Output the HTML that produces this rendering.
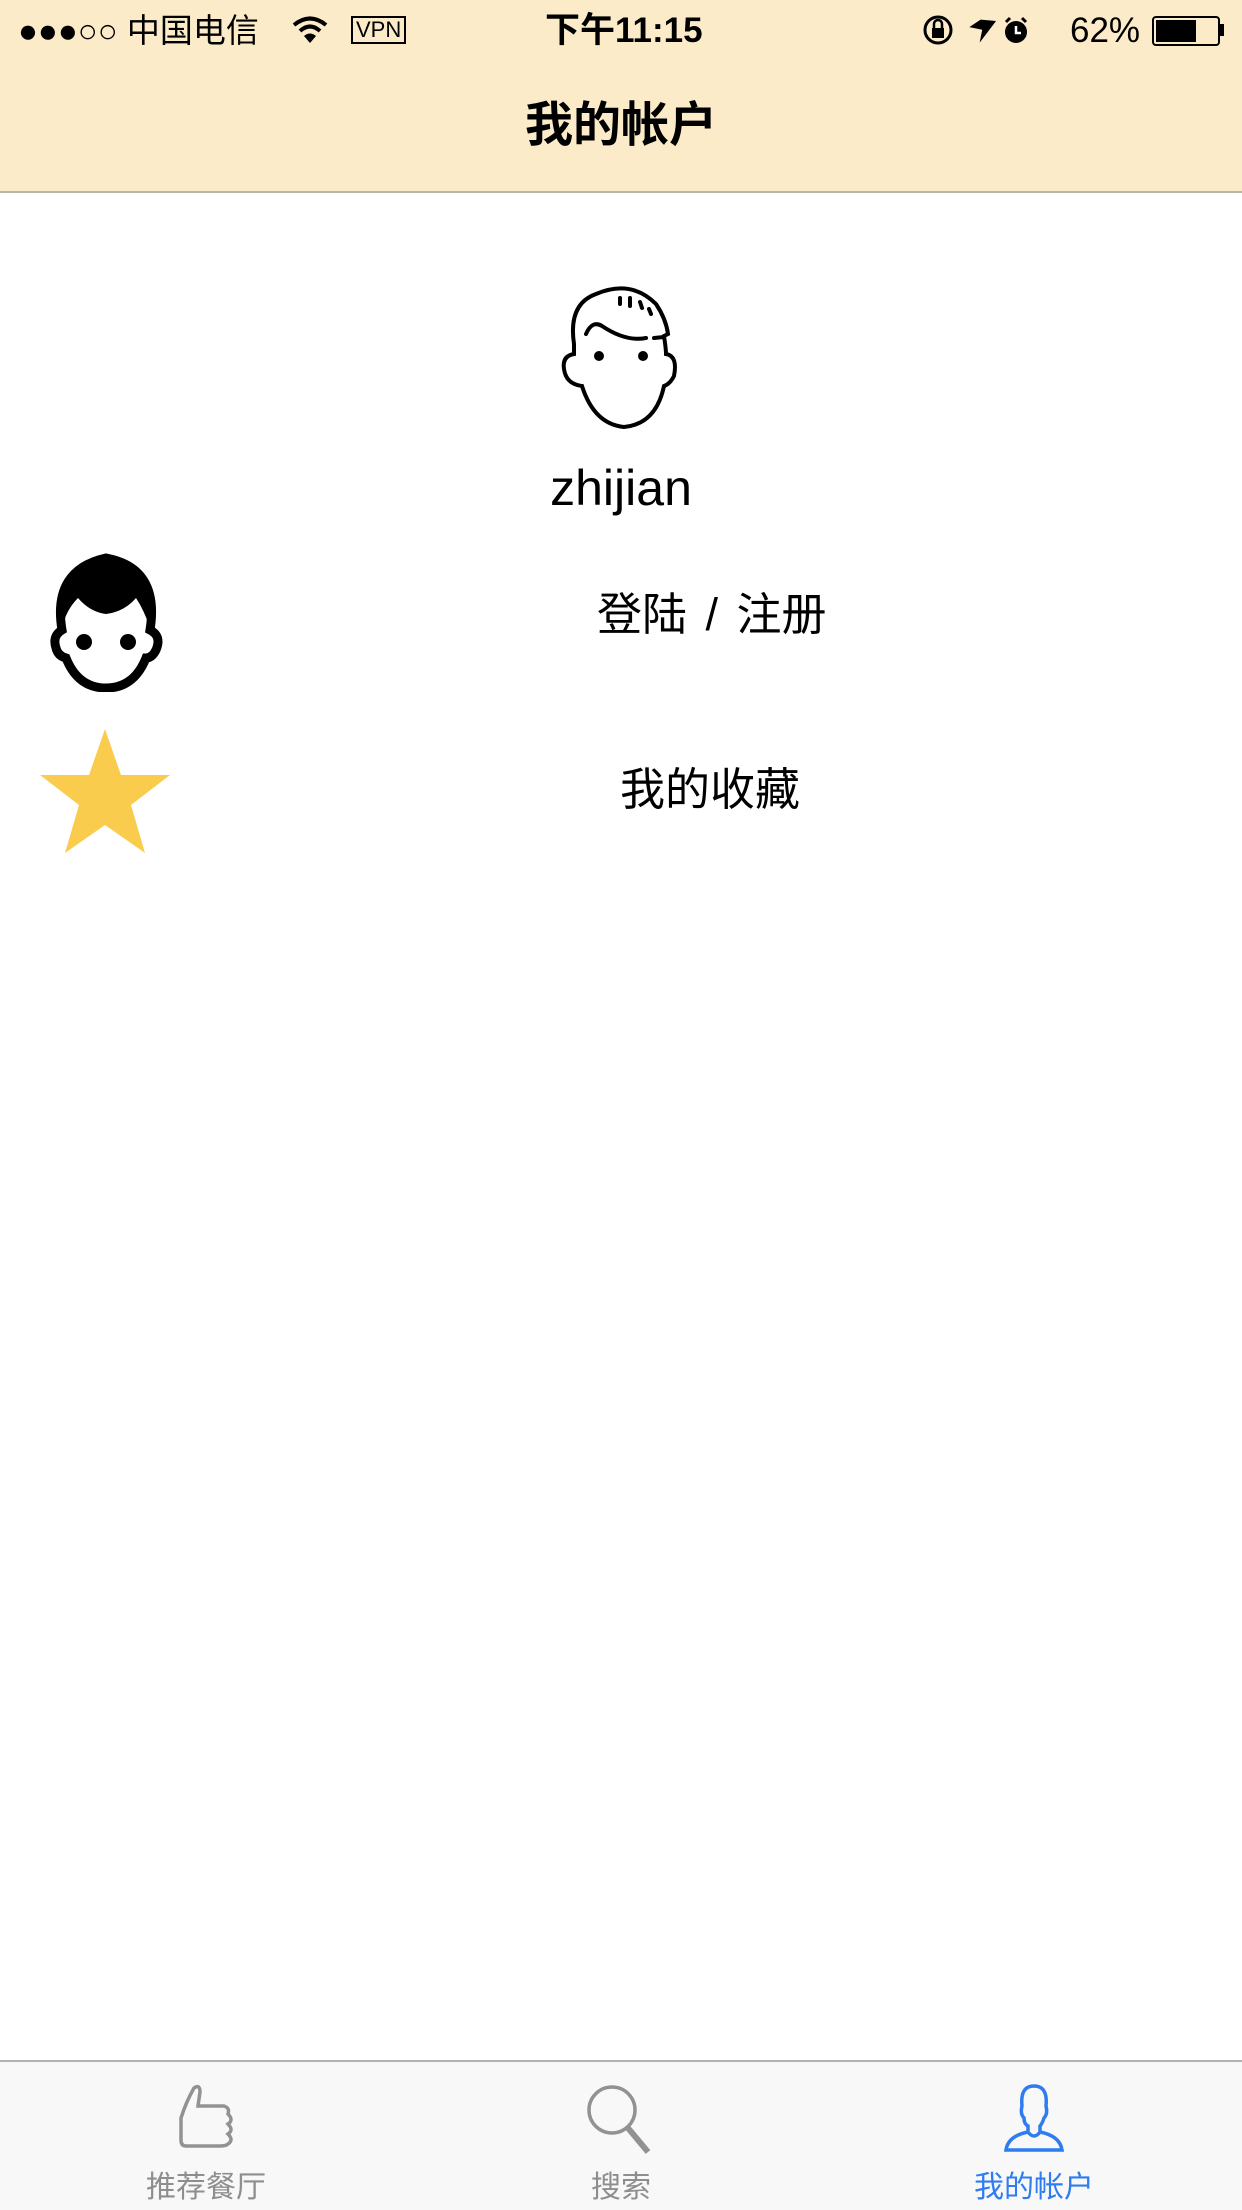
<!DOCTYPE html>
<html><head><meta charset="utf-8"><style>
body{margin:0;width:1242px;height:2208px;position:relative;background:#fff;font-family:"Liberation Sans","Noto Sans CJK SC",sans-serif;overflow:hidden}
.a{position:absolute;white-space:nowrap}
</style></head><body>
<div class="a" style="left:0;top:0;width:1242px;height:191px;background:#fbebc8;border-bottom:2px solid #b9b4a8"></div>
<div class="a" style="left:18px;top:10px;font-size:33px;line-height:42px">●●●○○ 中国电信</div>
<svg class="a" style="left:292px;top:16px" width="36" height="28" viewBox="0 0 36 28"><path d="M2 9 Q18 -4 34 9" stroke="#000" stroke-width="4" fill="none"/><path d="M8 15 Q18 6 28 15" stroke="#000" stroke-width="4" fill="none"/><path d="M12 20 L18 27 L24 20 Q18 15 12 20Z"/></svg>
<div class="a" style="left:351px;top:16px;border:2px solid #000;font-size:22px;line-height:22px;padding:1px 3px">VPN</div>
<div class="a" style="left:545px;top:10px;font-size:35px;line-height:42px;font-weight:bold">下午11:15</div>
<svg class="a" style="left:922px;top:14px" width="110" height="34" viewBox="0 0 110 34"><circle cx="16" cy="16" r="13" stroke="#000" stroke-width="3" fill="none"/><rect x="10" y="14" width="12" height="10"/><path d="M12 14 V10 a4 4 0 0 1 8 0 V14" stroke="#000" stroke-width="2.5" fill="none"/><path d="M55 6 L70 2 L62 28 L60 15 L47 17Z" transform="rotate(20 58 16)"/><circle cx="94" cy="18" r="11"/><path d="M84 8 L88 4 M104 8 L100 4" stroke="#000" stroke-width="3"/><path d="M94 12 V19 H99" stroke="#fff" stroke-width="2.5" fill="none"/></svg>
<div class="a" style="left:1070px;top:10px;font-size:35px;line-height:42px">62%</div>
<div class="a" style="left:1152px;top:16px;width:64px;height:26px;border:2px solid #000;border-radius:4px"></div>
<div class="a" style="left:1156px;top:20px;width:40px;height:22px;background:#000"></div>
<div class="a" style="left:1220px;top:24px;width:4px;height:12px;background:#000"></div>
<div class="a" style="left:0;width:1242px;top:96px;text-align:center;font-size:48px;line-height:60px;font-weight:bold">我的帐户</div>

<svg class="a" style="left:556px;top:284px" width="130" height="146" viewBox="0 0 130 146"><g stroke="#000" stroke-width="4" fill="none" stroke-linecap="round"><path d="M18 60 Q12 20 40 10 Q75 -5 100 20 Q110 35 112 50 L108 52 Q110 65 110 70 Q122 72 118 92 Q114 100 108 102 Q100 140 68 143 Q38 140 26 102 Q10 100 8 85 Q6 72 18 70 Z"/><path d="M30 50 Q36 36 46 42 Q70 58 90 54"/><path d="M98 54 L108 53"/><path d="M64 14 V20 M74 14 V22 M84 18 L86 24 M93 25 L95 30"/></g><circle cx="43" cy="72" r="5"/><circle cx="87" cy="72" r="5"/></svg>
<div class="a" style="left:0;width:1242px;top:458px;text-align:center;font-size:50px;line-height:60px">zhijian</div>

<svg class="a" style="left:44px;top:550px" width="124" height="142" viewBox="0 0 124 142"><path d="M18 80 Q8 20 62 8 Q116 18 106 80 Q118 86 112 100 Q108 108 102 108 Q90 138 62 138 Q34 138 22 108 Q14 106 12 98 Q8 86 18 80Z" fill="#fff" stroke="#000" stroke-width="9"/><path d="M18 78 Q12 12 62 8 Q114 14 106 78 Q100 60 92 48 Q80 62 62 64 Q46 62 34 48 Q22 60 18 78Z"/><circle cx="40" cy="92" r="8"/><circle cx="84" cy="92" r="8"/></svg>
<div class="a" style="left:597px;top:585px;font-size:45px;line-height:60px">登陆 <span style="margin:0 6px">/</span> 注册</div>

<svg class="a" style="left:38px;top:727px" width="134" height="128" viewBox="0 0 134 128"><path d="M67 2 L83 48 L132 48 L93 78 L107 126 L67 98 L27 126 L41 78 L2 48 L51 48Z" fill="#f9cc4e"/></svg>
<div class="a" style="left:620px;top:760px;font-size:45px;line-height:60px">我的收藏</div>

<div class="a" style="left:0;top:2060px;width:1242px;height:148px;background:#f8f8f8;border-top:2px solid #b2b2b2"></div>
<svg class="a" style="left:178px;top:2084px" width="60" height="66" viewBox="0 0 60 66"><path d="M8 62 Q3 62 3 56 L3 34 Q8 18 16 4 Q22 0 22 8 L20 22 L46 22 Q52 24 50 30 Q56 36 50 40 Q56 46 50 50 Q56 56 50 60 Q48 62 42 62Z" stroke="#929292" stroke-width="3.5" fill="none"/></svg>
<svg class="a" style="left:584px;top:2082px" width="72" height="74" viewBox="0 0 72 74"><circle cx="28" cy="28" r="23" stroke="#929292" stroke-width="3.5" fill="none"/><path d="M44 46 L64 70" stroke="#929292" stroke-width="6"/></svg>
<svg class="a" style="left:1000px;top:2084px" width="68" height="70" viewBox="0 0 68 70"><g stroke="#2f7bf0" stroke-width="3.5" fill="none"><path d="M22 22 Q20 2 34 2 Q48 2 46 22 Q48 30 44 34 Q42 40 40 42 L40 48 Q60 52 62 66 L6 66 Q8 52 28 48 L28 42 Q24 40 24 34 Q20 30 22 22Z"/><path d="M28 48 Q34 56 40 48"/></g></svg>
<div class="a" style="left:106px;width:200px;top:2168px;text-align:center;font-size:30px;line-height:40px;color:#8e8e8e">推荐餐厅</div>
<div class="a" style="left:521px;width:200px;top:2168px;text-align:center;font-size:30px;line-height:40px;color:#8e8e8e">搜索</div>
<div class="a" style="left:934px;width:200px;top:2168px;text-align:center;font-size:30px;line-height:40px;color:#2f7bf0">我的帐户</div>
</body></html>
